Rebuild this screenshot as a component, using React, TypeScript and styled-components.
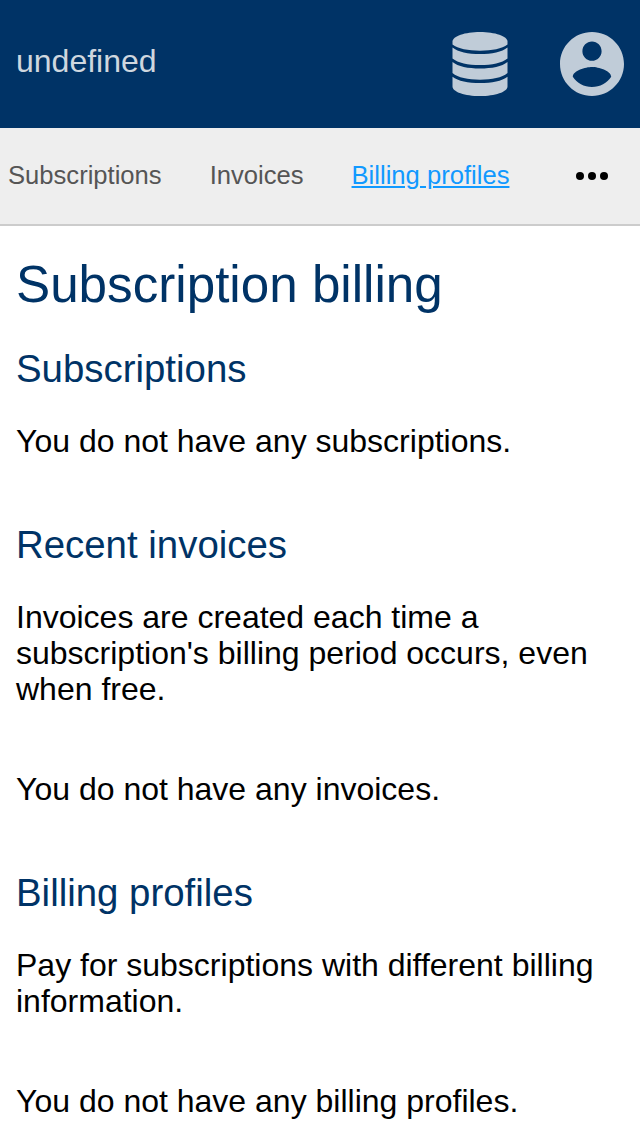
import React from "react";
import styled, { createGlobalStyle } from "styled-components";

const GlobalStyle = createGlobalStyle`
  *, *::before, *::after { box-sizing: border-box; }
  body {
    margin: 0;
    height: 1136px;
    overflow: hidden;
    background: #fff;
    color: #000;
    font: 32px/36px "Liberation Sans", Arial, sans-serif;
  }
`;

const Header = styled.header`
  height: 128px;
  padding: 0 16px;
  display: flex;
  align-items: center;
  background: #003366;
  color: #c0ccd8;
`;

const Brand = styled.span`
  flex: 1;
  padding-bottom: 6px;
  color: #cfd7df;
`;

const HeaderIcons = styled.div`
  display: flex;
  gap: 52px;

  svg { display: block; fill: currentColor; }
`;

const Navbar = styled.nav`
  height: 98px;
  padding: 0 32px 0 8px;
  display: flex;
  align-items: center;
  gap: 48px;
  background: #eeeeee;
  border-bottom: 2px solid #cccccc;
  font-size: 25.6px;
  line-height: 30px;
`;

const NavLink = styled.a<{ $active?: boolean }>`
  padding-bottom: 2px;
  color: ${(p) => (p.$active ? "#1199ff" : "#555555")};
  text-decoration: ${(p) => (p.$active ? "underline" : "none")};
  white-space: nowrap;
`;

const MoreButton = styled.a`
  display: flex;
  gap: 4px;
  margin-left: auto;
`;

const Dot = styled.i`
  width: 8px;
  height: 8px;
  border-radius: 50%;
  background: #000;
`;

const Content = styled.main`
  padding: 30px 16px 0;
`;

const Title = styled.h1`
  margin: 0 0 33px;
  color: #003366;
  font-size: 51.2px;
  font-weight: 400;
  line-height: 58px;
`;

const Section = styled.section`
  margin-bottom: 64px;
`;

const Heading = styled.h2`
  margin: 0 0 32px;
  color: #003366;
  font-size: 38.4px;
  font-weight: 400;
  line-height: 44px;
`;

const Text = styled.p`
  margin: 0;

  & + & { margin-top: 64px; }
`;

const DatabaseIcon = () => (
  <svg width="56" height="64" viewBox="0 0 56 64">
    <path d="M28 0C43 0 55.5 4.2 55.5 9.6V12.6C50 16.8 40 18.7 28 18.7S6 16.8 .5 12.6V9.6C.5 4.2 13 0 28 0Z" />
    <path d="M.5 15.4C6 20 16 22 28 22S50 20 55.5 15.4V26.6C50 31.2 40 33.1 28 33.1S6 31.2 .5 26.6Z" />
    <path d="M.5 30.1C6 34.6 16 36.6 28 36.6S50 34.6 55.5 30.1V41.1C50 45.8 40 47.7 28 47.7S6 45.8 .5 41.1Z" />
    <path d="M.5 44.7C6 49.1 16 51 28 51S50 49.1 55.5 44.7V54.4C55.5 59.8 43 64 28 64S.5 59.8 .5 54.4Z" />
  </svg>
);

const AccountIcon = () => (
  <svg width="64" height="64" viewBox="2 2 20 20">
    <path d="M12 2C6.48 2 2 6.48 2 12s4.48 10 10 10 10-4.48 10-10S17.52 2 12 2zm0 3c1.66 0 3 1.34 3 3s-1.34 3-3 3-3-1.34-3-3 1.34-3 3-3zm0 14.2c-2.5 0-4.71-1.28-6-3.22.03-1.99 4-3.08 6-3.08 1.99 0 5.97 1.09 6 3.08-1.29 1.94-3.5 3.22-6 3.22z" />
  </svg>
);

export default function App() {
  return (
    <>
      <GlobalStyle />
      <Header>
        <Brand>undefined</Brand>
        <HeaderIcons>
          <DatabaseIcon />
          <AccountIcon />
        </HeaderIcons>
      </Header>
      <Navbar>
        <NavLink>Subscriptions</NavLink>
        <NavLink>Invoices</NavLink>
        <NavLink $active>Billing profiles</NavLink>
        <MoreButton aria-label="More">
          <Dot />
          <Dot />
          <Dot />
        </MoreButton>
      </Navbar>
      <Content>
        <Title>Subscription billing</Title>
        <Section>
          <Heading>Subscriptions</Heading>
          <Text>You do not have any subscriptions.</Text>
        </Section>
        <Section>
          <Heading>Recent invoices</Heading>
          <Text>Invoices are created each time a subscription's billing period occurs, even when free.</Text>
          <Text>You do not have any invoices.</Text>
        </Section>
        <Section>
          <Heading>Billing profiles</Heading>
          <Text>Pay for subscriptions with different billing information.</Text>
          <Text>You do not have any billing profiles.</Text>
        </Section>
      </Content>
    </>
  );
}
